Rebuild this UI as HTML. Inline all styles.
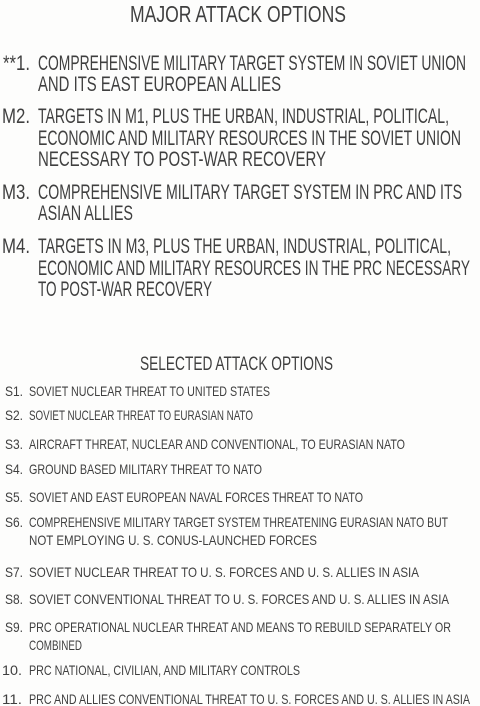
<!DOCTYPE html>
<html><head><meta charset="utf-8"><style>
html,body{margin:0;padding:0;background:#fdfdfc;}
svg{display:block}
text{font-family:"Liberation Sans",sans-serif;fill:#3f3f3f;}
.m{font-size:21px;}
.s{font-size:14px;}
</style></head><body>
<svg width="480" height="706" viewBox="0 0 480 706" xmlns="http://www.w3.org/2000/svg">
<rect width="480" height="706" fill="#fdfdfc"/>
<text x="130" y="22" font-size="23" textLength="216" lengthAdjust="spacingAndGlyphs" fill="#555">MAJOR ATTACK OPTIONS</text>
<text class="m" x="3" y="70" textLength="27" lengthAdjust="spacingAndGlyphs">**1.</text>
<text class="m" x="38" y="70" textLength="428" lengthAdjust="spacingAndGlyphs">COMPREHENSIVE MILITARY TARGET SYSTEM IN SOVIET UNION</text>
<text class="m" x="38" y="91" textLength="243" lengthAdjust="spacingAndGlyphs">AND ITS EAST EUROPEAN ALLIES</text>
<text class="m" x="2" y="123" textLength="28" lengthAdjust="spacingAndGlyphs">M2.</text>
<text class="m" x="38" y="123" textLength="411" lengthAdjust="spacingAndGlyphs">TARGETS IN M1, PLUS THE URBAN, INDUSTRIAL, POLITICAL,</text>
<text class="m" x="38" y="145" textLength="423" lengthAdjust="spacingAndGlyphs">ECONOMIC AND MILITARY RESOURCES IN THE SOVIET UNION</text>
<text class="m" x="38" y="166" textLength="288" lengthAdjust="spacingAndGlyphs">NECESSARY TO POST-WAR RECOVERY</text>
<text class="m" x="2" y="199" textLength="28" lengthAdjust="spacingAndGlyphs">M3.</text>
<text class="m" x="38" y="199" textLength="424" lengthAdjust="spacingAndGlyphs">COMPREHENSIVE MILITARY TARGET SYSTEM IN PRC AND ITS</text>
<text class="m" x="38" y="220" textLength="95" lengthAdjust="spacingAndGlyphs">ASIAN ALLIES</text>
<text class="m" x="2" y="253" textLength="28" lengthAdjust="spacingAndGlyphs">M4.</text>
<text class="m" x="38" y="253" textLength="413" lengthAdjust="spacingAndGlyphs">TARGETS IN M3, PLUS THE URBAN, INDUSTRIAL, POLITICAL,</text>
<text class="m" x="38" y="275" textLength="432" lengthAdjust="spacingAndGlyphs">ECONOMIC AND MILITARY RESOURCES IN THE PRC NECESSARY</text>
<text class="m" x="38" y="296" textLength="174" lengthAdjust="spacingAndGlyphs">TO POST-WAR RECOVERY</text>
<text x="140" y="370" font-size="19" textLength="193" lengthAdjust="spacingAndGlyphs" fill="#555">SELECTED ATTACK OPTIONS</text>
<text class="s" x="5" y="396" textLength="18" lengthAdjust="spacingAndGlyphs">S1.</text>
<text class="s" x="29" y="396" textLength="241" lengthAdjust="spacingAndGlyphs">SOVIET NUCLEAR THREAT TO UNITED STATES</text>
<text class="s" x="5" y="420" textLength="18" lengthAdjust="spacingAndGlyphs">S2.</text>
<text class="s" x="29" y="420" textLength="224" lengthAdjust="spacingAndGlyphs">SOVIET NUCLEAR THREAT TO EURASIAN NATO</text>
<text class="s" x="5" y="449" textLength="18" lengthAdjust="spacingAndGlyphs">S3.</text>
<text class="s" x="29" y="449" textLength="376" lengthAdjust="spacingAndGlyphs">AIRCRAFT THREAT, NUCLEAR AND CONVENTIONAL, TO EURASIAN NATO</text>
<text class="s" x="5" y="474" textLength="18" lengthAdjust="spacingAndGlyphs">S4.</text>
<text class="s" x="29" y="474" textLength="233" lengthAdjust="spacingAndGlyphs">GROUND BASED MILITARY THREAT TO NATO</text>
<text class="s" x="5" y="502" textLength="18" lengthAdjust="spacingAndGlyphs">S5.</text>
<text class="s" x="29" y="502" textLength="334" lengthAdjust="spacingAndGlyphs">SOVIET AND EAST EUROPEAN NAVAL FORCES THREAT TO NATO</text>
<text class="s" x="5" y="527" textLength="18" lengthAdjust="spacingAndGlyphs">S6.</text>
<text class="s" x="29" y="527" textLength="419" lengthAdjust="spacingAndGlyphs">COMPREHENSIVE MILITARY TARGET SYSTEM THREATENING EURASIAN NATO BUT</text>
<text class="s" x="29" y="545" textLength="288" lengthAdjust="spacingAndGlyphs">NOT EMPLOYING U. S. CONUS-LAUNCHED FORCES</text>
<text class="s" x="5" y="577" textLength="18" lengthAdjust="spacingAndGlyphs">S7.</text>
<text class="s" x="29" y="577" textLength="390" lengthAdjust="spacingAndGlyphs">SOVIET NUCLEAR THREAT TO U. S. FORCES AND U. S. ALLIES IN ASIA</text>
<text class="s" x="5" y="604" textLength="18" lengthAdjust="spacingAndGlyphs">S8.</text>
<text class="s" x="29" y="604" textLength="420" lengthAdjust="spacingAndGlyphs">SOVIET CONVENTIONAL THREAT TO U. S. FORCES AND U. S. ALLIES IN ASIA</text>
<text class="s" x="5" y="632" textLength="18" lengthAdjust="spacingAndGlyphs">S9.</text>
<text class="s" x="29" y="632" textLength="422" lengthAdjust="spacingAndGlyphs">PRC OPERATIONAL NUCLEAR THREAT AND MEANS TO REBUILD SEPARATELY OR</text>
<text class="s" x="29" y="650" textLength="53" lengthAdjust="spacingAndGlyphs">COMBINED</text>
<text class="s" x="2" y="675" textLength="20" lengthAdjust="spacingAndGlyphs">10.</text>
<text class="s" x="29" y="675" textLength="271" lengthAdjust="spacingAndGlyphs">PRC NATIONAL, CIVILIAN, AND MILITARY CONTROLS</text>
<text class="s" x="2" y="704" textLength="20" lengthAdjust="spacingAndGlyphs">11.</text>
<text class="s" x="29" y="704" textLength="441" lengthAdjust="spacingAndGlyphs">PRC AND ALLIES CONVENTIONAL THREAT TO U. S. FORCES AND U. S. ALLIES IN ASIA</text>
</svg>
</body></html>
